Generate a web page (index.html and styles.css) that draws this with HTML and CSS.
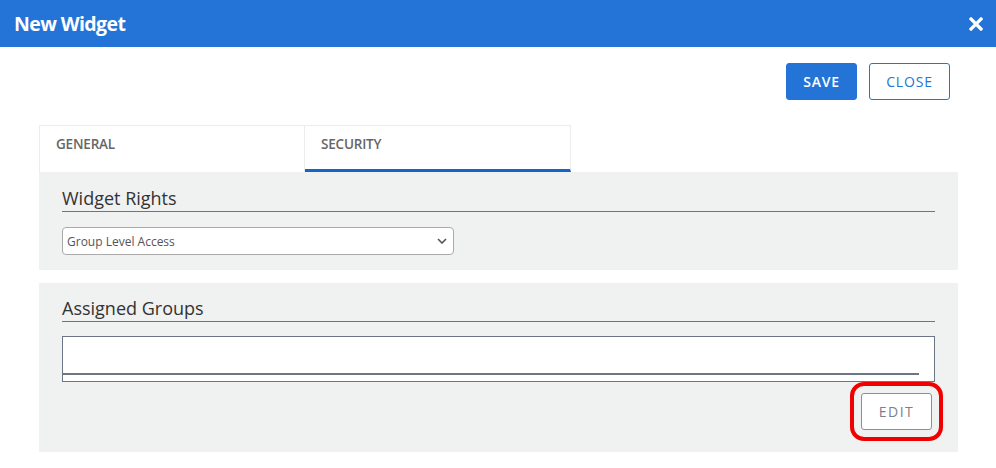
FILE: index.html
```html
<!DOCTYPE html>
<html lang="en">
<head>
  <meta charset="UTF-8">
  <meta name="viewport" content="width=device-width, initial-scale=1.0">
  <title>New Widget</title>
  <link rel="stylesheet" href="styles.css">
</head>
<body>

  <header class="dialog-header">
    <h1>New Widget</h1>
    <button class="icon-close" type="button" aria-label="Close">
      <svg width="14" height="14" viewBox="0 0 14 14">
        <path d="M2 2 L12 12 M12 2 L2 12" stroke="#fff" stroke-width="3.2" stroke-linecap="square"/>
      </svg>
    </button>
  </header>

  <div class="actions">
    <button class="btn btn-primary" type="button">SAVE</button>
    <button class="btn btn-outline" type="button">CLOSE</button>
  </div>

  <main class="content">
    <div class="tabs">
      <div class="tab">GENERAL</div>
      <div class="tab active">SECURITY</div>
    </div>

    <section class="panel panel-rights">
      <h2>Widget Rights</h2>
      <div class="select">
        <span>Group Level Access</span>
        <svg width="10" height="6" viewBox="0 0 10 6">
          <path d="M1 1 L5 5 L9 1" fill="none" stroke="#555" stroke-width="1.6"/>
        </svg>
      </div>
    </section>

    <section class="panel panel-groups">
      <h2>Assigned Groups</h2>
      <div class="groups-box">
        <div class="groups-list"></div>
      </div>
      <div class="panel-footer">
        <button class="btn btn-edit" type="button">EDIT</button>
      </div>
    </section>
  </main>

</body>
</html>
```

FILE: styles.css
```css
* {
  box-sizing: border-box;
}

body {
  margin: 0;
  font-family: "Open Sans", Arial, sans-serif;
  background: white;
  color: #333;
}

.dialog-header {
  background: #2474d8;
  height: 47px;
  display: flex;
  align-items: center;
  justify-content: space-between;
  padding: 0 13px 0 14px;
}

.dialog-header h1 {
  margin: 0;
  color: white;
  font-size: 19.5px;
  font-weight: 700;
  letter-spacing: -0.6px;
}

.icon-close {
  background: none;
  border: none;
  padding: 0;
  display: flex;
  cursor: pointer;
}

.actions {
  display: flex;
  justify-content: flex-end;
  gap: 12px;
  padding: 16px 46px 0 0;
}

.btn {
  font-family: "Open Sans", Arial, sans-serif;
  font-size: 14px;
  height: 37px;
  border-radius: 3px;
  cursor: pointer;
  letter-spacing: 0.8px;
}

.btn-primary {
  background: #2474d8;
  color: white;
  border: 1px solid #2474d8;
  width: 71px;
  font-weight: 600;
}

.btn-outline {
  background: white;
  color: #2474d8;
  border: 1px solid #2474d8;
  width: 81px;
}

.content {
  margin: 25px 38px 0 39px;
}

.tabs {
  display: flex;
}

.tab {
  width: 266px;
  height: 47px;
  padding: 9px 16px 0;
  font-size: 13.5px;
  font-weight: 600;
  color: #666;
  border: 1px solid #ececec;
  border-bottom: none;
  letter-spacing: -0.2px;
}

.tab + .tab {
  border-left: none;
}

.tab.active {
  border-bottom: 3px solid #1565c8;
}

.panel {
  background: #f0f1f1;
  padding: 13px 23px 15px;
}

.panel-rights {
  padding-top: 14px;
}

.panel h2 {
  margin: 0;
  font-size: 18px;
  font-weight: 400;
  line-height: 25px;
  color: #333;
  border-bottom: 1px solid #6b7585;
}

.select {
  margin-top: 15px;
  width: 392px;
  height: 28px;
  background: white;
  border: 1px solid #aaa;
  border-radius: 4px;
  display: flex;
  align-items: center;
  justify-content: space-between;
  padding: 0 6px 0 4px;
  font-size: 12px;
  color: #555;
}

.panel-groups {
  margin-top: 13px;
  padding-bottom: 22px;
}

.groups-box {
  margin-top: 14px;
  height: 46px;
  background: white;
  border: 1px solid #6b7585;
}

.groups-list {
  height: 38px;
  margin-right: 15px;
  border-bottom: 2px solid #6b7585;
}

.panel-footer {
  display: flex;
  justify-content: flex-end;
  padding: 11px 3px 0 0;
}

.btn-edit {
  width: 71px;
  background: white;
  color: #7a808c;
  border: 1px solid #8a8f99;
  outline: 4px solid #f00000;
  outline-offset: 7px;
  letter-spacing: 1.5px;
}
```
